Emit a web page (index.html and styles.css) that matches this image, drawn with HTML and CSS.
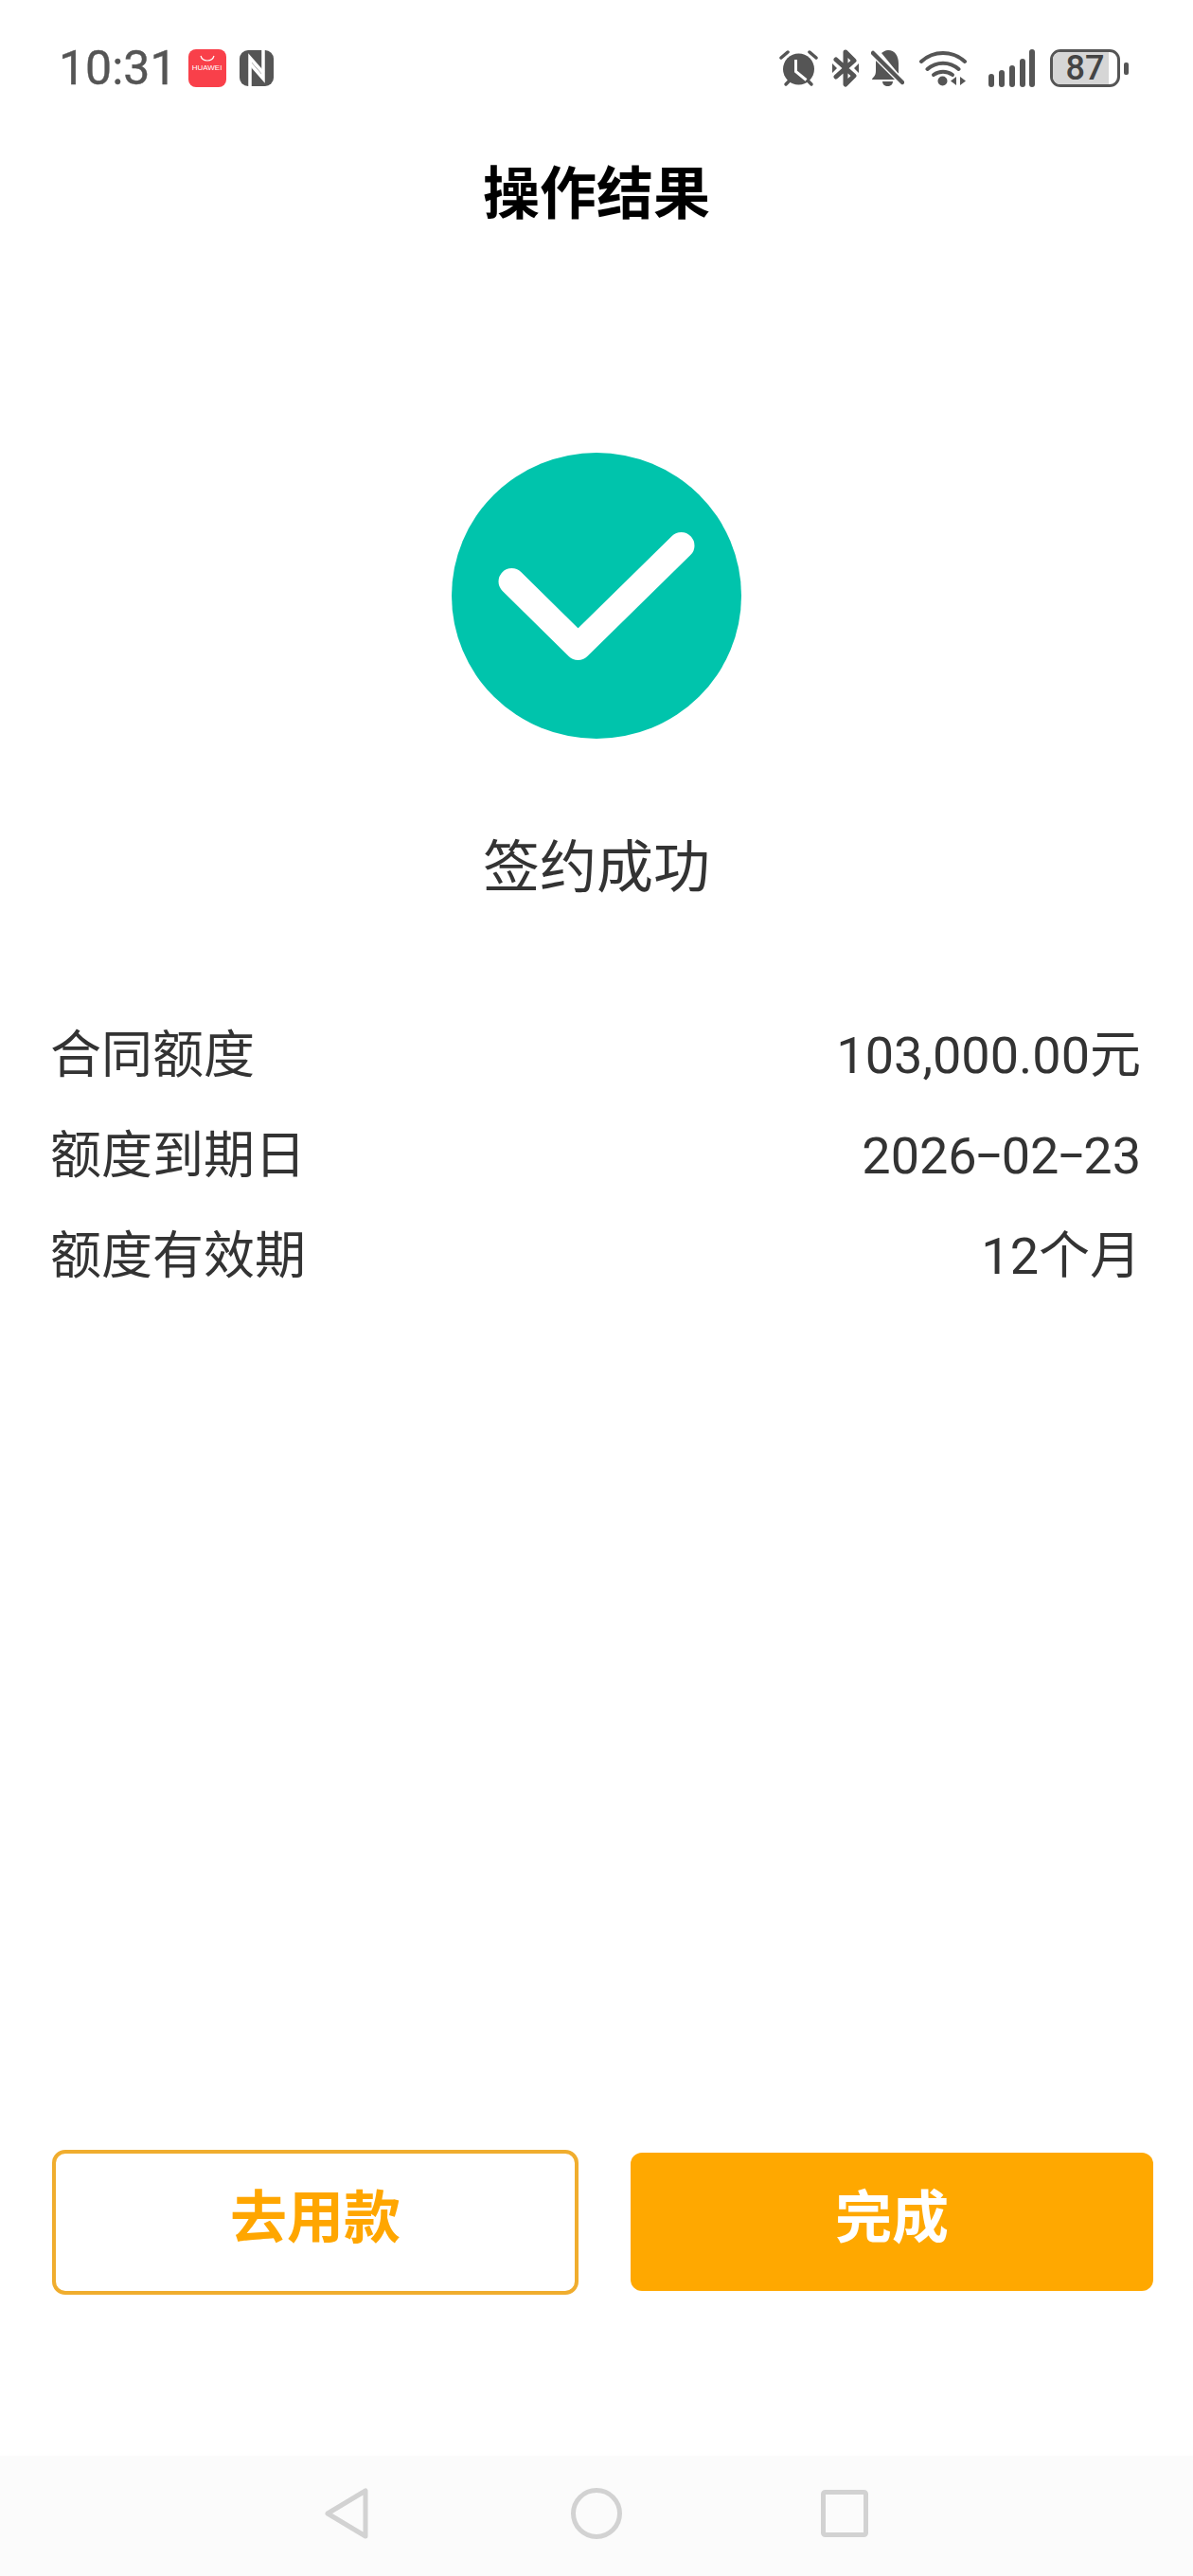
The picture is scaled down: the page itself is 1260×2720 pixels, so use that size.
FILE: index.html
```html
<!DOCTYPE html>
<html>
<head>
  <meta charset="utf-8">
  <title>操作结果</title>
  <link rel="stylesheet" href="styles.css">
</head>
<body>

<div class="page">
  <div class="status-bar">
    <div class="status-left">
      <span class="time">10:31</span>
      <div class="app-badge">
        <svg class="bag-handle" width="16" height="7" viewBox="0 0 16 7"><path d="M1 1c1 3.500 3.500 5 7 5s6-1.500 7-5" fill="none" stroke="#fff" stroke-width="1.200"/></svg>
        <span class="app-badge-text">HUAWEI</span>
      </div>
      <svg class="icon" width="36" height="38" viewBox="0 0 36 38">
        <rect width="36" height="38" rx="9" fill="#555"/>
        <path fill="none" stroke="#fff" stroke-width="3.500" d="M11 38V8l14 16"/>
        <path fill="none" stroke="#fff" stroke-width="3.500" d="M25 0v30L11 14"/>
      </svg>
    </div>
    <div class="status-right">
      <!-- alarm -->
      <svg class="icon alarm" width="41" height="40" viewBox="0 0 41 40">
        <circle cx="20.500" cy="21" r="16.500" fill="#555"/>
        <path d="M2 9l7-6M39 9l-7-6" stroke="#555" stroke-width="3.500" stroke-linecap="round"/>
        <path d="M7 37l3-3M34 37l-3-3" stroke="#555" stroke-width="3.500" stroke-linecap="round"/>
        <path d="M17.500 11v12.500l11 9" fill="none" stroke="#fff" stroke-width="3"/>
      </svg>
      <!-- bluetooth -->
      <svg class="icon bluetooth" width="28" height="40" viewBox="0 0 28 40">
        <path d="M4 11l19 17-9 9V3l9 9L4 29" fill="none" stroke="#555" stroke-width="5" stroke-linejoin="round" stroke-linecap="round"/>
        <path d="M0 15l5 5-5 5zM28 15l-5 5 5 5z" fill="#555"/>
      </svg>
      <!-- muted bell -->
      <svg class="icon bell" width="35" height="38" viewBox="0 0 35 38">
        <path fill="#555" d="M6 8L28 31H1c0-2 4-3 4-9V13c0-2 .4-3.500 1-5zM11 3c2-1.500 4-3 7-3 7 0 11 6 11 14v11z"/>
        <path fill="#555" d="M12 33h11c0 3-2.500 5-5.500 5S12 36 12 33z"/>
        <path d="M2 3l31 31" stroke="#fff" stroke-width="7"/>
        <path d="M2 3l31 31" stroke="#555" stroke-width="4.500" stroke-linecap="round"/>
      </svg>
      <!-- wifi -->
      <svg class="icon wifi" width="50" height="40" viewBox="0 0 50 40">
        <path d="M2 13C15 1 35 1 48 13M8.500 21C18 12.500 32 12.500 41.500 21" fill="none" stroke="#555" stroke-width="4" stroke-linecap="round"/>
        <path d="M15 27c6-4.500 14-4.500 20 0" fill="none" stroke="#555" stroke-width="4" stroke-linecap="round"/>
        <circle cx="24.500" cy="33.500" r="5" fill="#555"/>
        <path d="M39 29v9l-6-4.500zM43 29v9l6-4.500z" fill="#555"/>
      </svg>
      <!-- signal -->
      <svg class="icon signal" width="49" height="40" viewBox="0 0 49 40">
        <g stroke="#555" stroke-width="6" stroke-linecap="round">
          <path d="M3 29v8M14 25v12M25 20v17M36 13v24M46 3v34"/>
        </g>
      </svg>
      <div class="battery">
        <div class="battery-body">
          <div class="battery-fill"></div>
          <span class="battery-num">87</span>
        </div>
        <div class="battery-nub"></div>
      </div>
    </div>
  </div>

  <div class="header">操作结果</div>

  <div class="result">
    <svg class="check" width="306" height="302" viewBox="0 0 306 302">
      <ellipse cx="153" cy="151" rx="153" ry="151" fill="#00c4ac"/>
      <path d="M63.500 136l70 69L242.500 98" fill="none" stroke="#fff" stroke-width="28" stroke-linecap="round" stroke-linejoin="round"/>
    </svg>
    <div class="result-text">签约成功</div>
  </div>

  <div class="info">
    <div class="info-row"><span>合同额度</span><span>103,000.00元</span></div>
    <div class="info-row"><span>额度到期日</span><span>2026<span class="dash">-</span>02<span class="dash">-</span>23</span></div>
    <div class="info-row"><span>额度有效期</span><span>12个月</span></div>
  </div>

  <div class="actions">
    <div class="btn btn-outline">去用款</div>
    <div class="btn btn-fill">完成</div>
  </div>

  <div class="nav-bar">
    <svg width="46" height="54" viewBox="0 0 46 54"><path d="M43 3v48L3 27z" fill="none" stroke="#d2d2d2" stroke-width="5" stroke-linejoin="round"/></svg>
    <svg class="nav-home" width="54" height="54" viewBox="0 0 54 54"><circle cx="27" cy="27" r="24.500" fill="none" stroke="#d2d2d2" stroke-width="5"/></svg>
    <svg width="50" height="50" viewBox="0 0 50 50"><rect x="2.500" y="2.500" width="45" height="45" rx="2" fill="none" stroke="#d2d2d2" stroke-width="5"/></svg>
  </div>
</div>

</body>
</html>
```

FILE: styles.css
```css
* {
  box-sizing: border-box;
}

body {
  margin: 0;
  background: white;
  font-family: Roboto, 'Noto Sans CJK SC', sans-serif;
  color: #333;
}

.page {
  width: 1260px;
  height: 2720px;
  display: flex;
  flex-direction: column;
  overflow: hidden;
}

.status-bar {
  height: 144px;
  padding: 0 68px 0 62px;
  display: flex;
  justify-content: space-between;
  align-items: center;
}

.status-left, .status-right {
  display: flex;
  align-items: center;
}

.icon {
  display: block;
  flex: none;
}

.time {
  font-size: 50px;
  color: #555;
  margin-right: 12px;
  -webkit-text-stroke: 0.4px #555;
}

.app-badge {
  width: 40px;
  height: 40px;
  margin-right: 14px;
  border-radius: 8px;
  background: #f9404a;
  display: flex;
  flex-direction: column;
  align-items: center;
  padding-top: 6px;
}

.bag-handle {
  display: block;
}

.app-badge-text {
  font-size: 8px;
  line-height: 14px;
  color: white;
  font-family: 'Liberation Sans', sans-serif;
}

.alarm {
  margin-right: 15px;
}

.bluetooth {
  margin-right: 13px;
}

.bell {
  margin-right: 16px;
}

.wifi {
  margin-right: 23px;
}

.signal {
  margin-right: 16px;
}

.battery {
  display: flex;
  align-items: center;
}

.battery-body {
  width: 74px;
  height: 40px;
  border: 3px solid #555;
  border-radius: 11px;
  position: relative;
  display: flex;
  justify-content: center;
  align-items: center;
  overflow: hidden;
}

.battery-fill {
  position: absolute;
  left: 0;
  top: 0;
  bottom: 0;
  width: 87%;
  background: #d6d6d6;
}

.battery-num {
  position: relative;
  font-size: 36px;
  font-weight: 500;
  color: #444;
}

.battery-nub {
  width: 5px;
  height: 13px;
  margin-left: 4px;
  border-radius: 2px;
  background: #555;
}

.header {
  height: 118px;
  line-height: 118px;
  padding-top: 3px;
  text-align: center;
  font-size: 60px;
  font-weight: bold;
  color: #000;
}

.result {
  padding-top: 216px;
  display: flex;
  flex-direction: column;
  align-items: center;
}

.check {
  display: block;
}

.result-text {
  margin-top: 93px;
  line-height: 88px;
  font-size: 60px;
  color: #333;
}

.info {
  margin-top: 109px;
  padding: 0 55px 0 53px;
  flex: 1;
}

.info-row {
  height: 106px;
  display: flex;
  justify-content: space-between;
  align-items: baseline;
  font-size: 54px;
  color: #333;
}

.dash {
  display: inline-block;
  margin: 0 5.500px;
  transform: scaleX(1.7) translateY(-3px);
}

.actions {
  padding: 0 42px 170px 55px;
  display: flex;
  align-items: center;
  gap: 55px;
}

.btn {
  text-align: center;
  font-size: 60px;
  font-weight: bold;
}

.btn-outline {
  width: 556px;
  height: 153px;
  line-height: 138px;
  border: 4px solid #f0ad2e;
  border-radius: 14px;
  color: #ffa600;
}

.btn-fill {
  width: 552px;
  height: 146px;
  line-height: 140px;
  margin-bottom: 2px;
  border-radius: 12px;
  background: #ffa800;
  color: white;
}

.nav-bar {
  height: 127px;
  background: #fbfbfb;
  display: flex;
  justify-content: center;
  align-items: center;
  gap: 212px;
  padding-bottom: 6px;
}

.nav-home {
  margin: 0 -2px 0 2px;
}
```
